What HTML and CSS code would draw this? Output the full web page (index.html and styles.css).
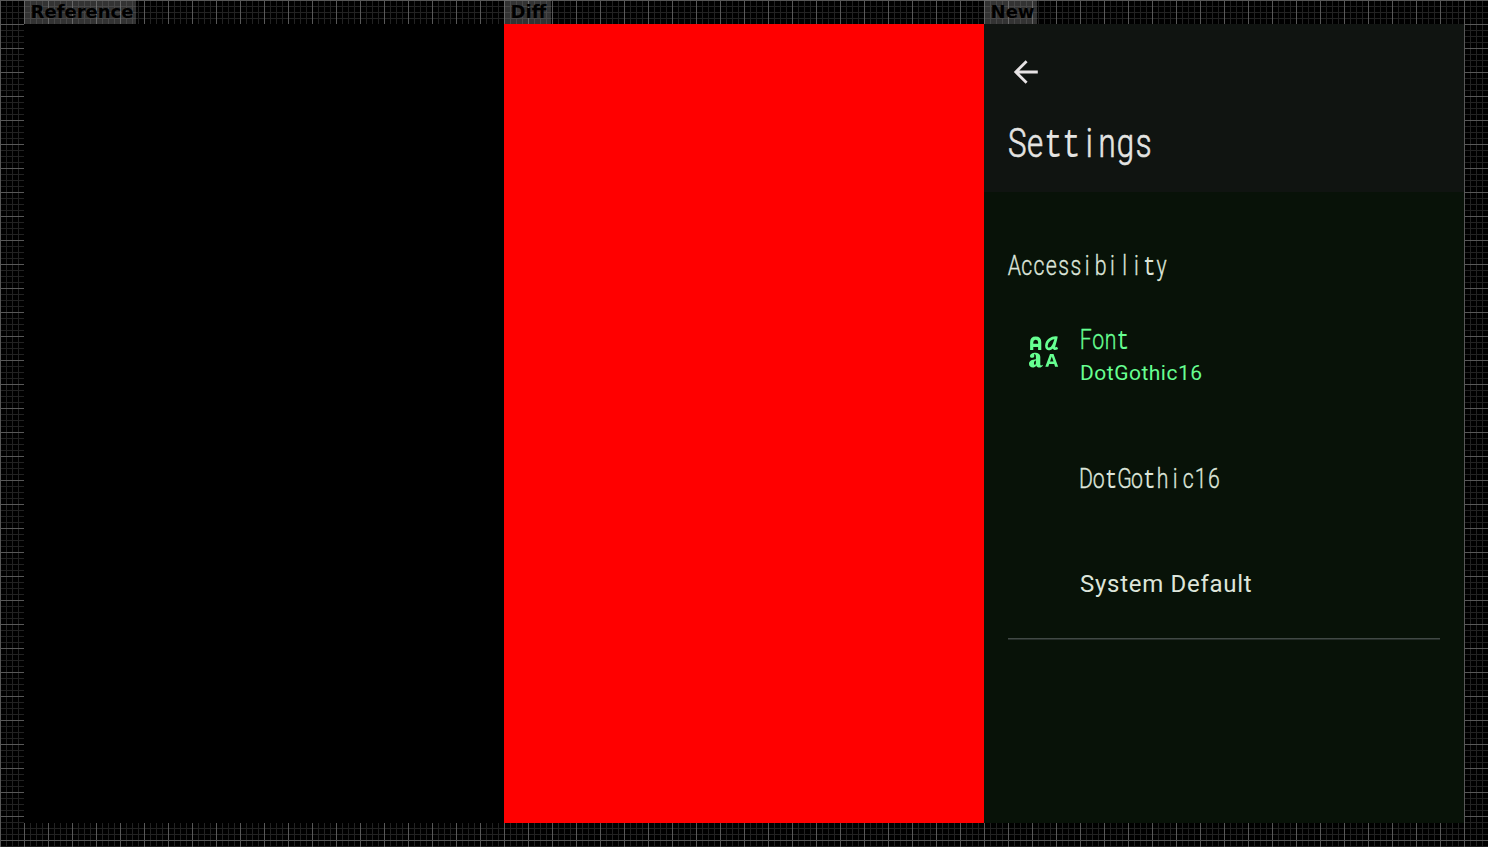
FILE: index.html
```
<!DOCTYPE html>
<html lang="en">
<head>
<meta charset="utf-8">
<title>Settings comparison</title>
<link rel="stylesheet" href="styles.css">
</head>
<body>
<main class="board">
  <section class="column">
    <h2 class="label label-reference">Reference</h2>
    <div class="panel panel-reference"></div>
  </section>
  <section class="column">
    <h2 class="label label-diff">Diff</h2>
    <div class="panel panel-diff"></div>
  </section>
  <section class="column">
    <h2 class="label label-new">New</h2>
    <div class="panel phone">
      <header class="app-bar">
        <svg class="back" viewBox="0 0 24 24"><path d="M23.8 12H2M12.6 1.2 1.8 12l10.8 10.8"/></svg>
        <svg class="title dot" width="160" height="48"><text transform="scale(.76 1)" y="35" x="12 35.7 59.8 83.5 106.8 130.5 154.5 178.4">Se<tspan class="wide">tt</tspan>ings</text></svg>
      </header>
      <div class="content">
        <svg class="section-title dot" width="180" height="32"><text transform="scale(.76 1)" y="23" x="8.5 24.7 40.9 57 73.2 89.4 104 121.8 137.4 153.6 169.1 185.9 202.1">Accessibili<tspan class="wide">t</tspan>y</text></svg>
        <div class="font-row">
          <svg class="font-icon" viewBox="0 0 30 32">
            <g class="strokes">
              <path d="M2.7 14V6.2q0-4.1 4-4.1t4 4.1V14M3 9.4h7.5"/>
              <path class="fine" d="M28.5 1.8C22.5.8 17.4 5 17.4 9.8c0 4.9 5.3 3.5 7.2-.7L27 2.8 25 10.2q-1 3.8 3.6 1.6"/>
            </g>
            <path class="solid" d="M16.300 30.800 21 17.900h3.500l4.700 12.900h-3.100l-.9-2.700h-5l-.9 2.700ZM21 25.600h3.500l-1.700-5.100Z"/>
            <path class="solid" d="M1 20.2c0-4.3 10.3-5 10.3.8v7.4c0 1.2 1 1.3 2.7.4-.3 3.5-6.2 3.7-6.7.7-2 3.4-7.3 2.200-7.3-1.5 0-3.2 2.8-4.4 6.900-4.700v-2.500c0-2.200-.8-2.700-2-2.300 2 3.800-3.900 4.400-3.900 1.700ZM6.900 24.500c-2.400.4-2.400 4.300-.9 4.300.9 0 .9-1.500.9-4.300Z"/>
          </svg>
          <div class="font-copy">
            <svg class="dot" width="120" height="32"><text transform="scale(.76 1)" y="25" x="8.7 25.3 41.500 57.600">Fon<tspan class="wide">t</tspan></text></svg>
            <div class="font-value">DotGothic16</div>
          </div>
        </div>
        <svg class="option-dot dot" width="180" height="32"><text transform="scale(.76 1)" y="25" x="9 25.8 42.300 60 76.300 92.500 110 126.500 143.700 160 177.400">Do<tspan class="wide">t</tspan>Go<tspan class="wide">t</tspan>hic16</text></svg>
        <div class="option">System Default</div>
        <hr class="divider">
      </div>
    </div>
  </section>
</main>
</body>
</html>
```
FILE: styles.css
```
* { box-sizing: border-box; }
body {
  margin: 0;
  background: #000;
  font-family: Roboto, sans-serif;
}
.board {
  display: flex;
  width: 1488px;
  height: 847px;
  padding: 0 24px;
  background-color: #000;
  background-image:
    linear-gradient(90deg, #585858 1px, transparent 1px),
    linear-gradient(#585858 1px, transparent 1px),
    linear-gradient(90deg, #222 1px, transparent 1px),
    linear-gradient(#222 1px, transparent 1px);
  background-size: 24px 24px, 24px 24px, 6px 6px, 6px 6px;
}
.column { width: 480px; }
.label {
  height: 24px;
  margin: 0;
  padding-left: 6.6px;
  background: rgba(128, 128, 128, .4);
  color: #000;
  font: bold 18px/23px "DejaVu Sans", sans-serif;
  white-space: nowrap;
}
.label-reference { width: 112px; }
.label-diff { width: 47px; }
.label-new { width: 53px; }
.panel { height: 799px; }
.panel-reference { background: #000; }
.panel-diff { background: #f00; }
.phone { background: #081208; color: #dde5da; }
.app-bar {
  height: 168px;
  padding: 36px 24px 0;
  background: #101411;
}
svg { display: block; overflow: visible; }
.back {
  width: 24px;
  height: 24px;
  margin-left: 6px;
  fill: none;
  stroke: #e7e3e5;
  stroke-width: 2.8;
}
.dot text {
  fill: currentColor;
  stroke: currentColor;
  stroke-width: .35px;
  font-family: Roboto, sans-serif;
  font-weight: 300;
  font-size: 28px;
  text-anchor: middle;
}
.dot .wide {
  font-family: "Liberation Mono", monospace;
  stroke: none;
}
.title { margin-top: 38px; color: #e4e4e2; }
.title text { font-size: 41px; stroke-width: .7px; }
.content { padding: 60px 24px 0; }
.font-row {
  display: flex;
  height: 72px;
  margin-top: 40px;
  color: #66ff91;
}
.font-icon {
  width: 30px;
  height: 32px;
  margin: 12px 21px 0;
  flex: none;
}
.strokes { fill: none; stroke: currentColor; stroke-width: 3.2; }
.fine { stroke-width: 2.6; }
.solid { fill: currentColor; fill-rule: evenodd; }
.font-copy { margin-left: -1px; }
.font-value {
  margin: 4px 0 0 1px;
  font-size: 21px;
  line-height: 26px;
  letter-spacing: .5px;
}
.option-dot { margin: 67px 0 0 71px; }
.option {
  margin: 73px 0 0 72px;
  font-size: 24px;
  line-height: 32px;
  letter-spacing: .72px;
}
.divider {
  height: 2px;
  margin: 38px 0 0;
  border: 0;
  background: linear-gradient(#414945 50%, #252d29 50%);
}
```
